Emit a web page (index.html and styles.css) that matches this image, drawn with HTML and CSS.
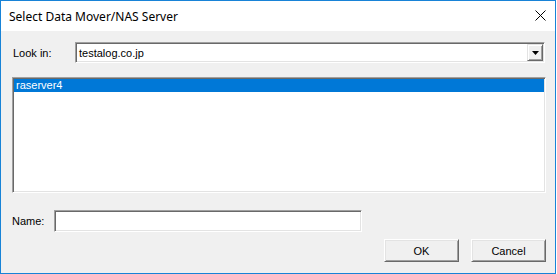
FILE: index.html
```html
<!DOCTYPE html>
<html>
<head>
<meta charset="utf-8">
<link rel="stylesheet" href="styles.css">
</head>
<body>
<div class="window">
  <div class="titlebar">
    <span class="title">Select Data Mover/NAS Server</span>
    <svg class="close" width="11" height="11" viewBox="0 0 11 11"><path d="M0.5 0.5 L10.5 10.5 M10.5 0.5 L0.5 10.5" stroke="#000" stroke-width="1" fill="none"/></svg>
  </div>
  <div class="content">
    <div class="row lookin">
      <span class="lbl lbl-look">Look in:</span>
      <div class="combo">
        <span class="combo-text">testalog.co.jp</span>
        <div class="dd"><svg width="7" height="4" viewBox="0 0 7 4"><path d="M0 0 H7 L3.5 4 Z" fill="#000"/></svg></div>
      </div>
    </div>
    <div class="listbox">
      <div class="item selected">raserver4</div>
    </div>
    <div class="row namerow">
      <span class="lbl lbl-name">Name:</span>
      <div class="edit"></div>
    </div>
    <div class="buttons">
      <div class="btn">OK</div>
      <div class="btn">Cancel</div>
    </div>
  </div>
</div>
</body>
</html>
```
FILE: styles.css
```css
html, body {
  margin: 0;
  padding: 0;
  background: #ffffff;
}
.window {
  width: 556px;
  height: 274px;
  box-sizing: border-box;
  border: 1px solid #1883d7;
  background: #f0f0f0;
  display: flex;
  flex-direction: column;
  font-family: "Liberation Sans", Arial, sans-serif;
  font-size: 11px;
  color: #000;
}
.titlebar {
  height: 30px;
  background: #ffffff;
  display: flex;
  align-items: center;
  justify-content: space-between;
  padding: 0 9px 0 8px;
}
.title {
  font-family: "Noto Sans", "Open Sans", sans-serif;
  font-size: 12px;
  padding-top: 1px;
}
.close {
  display: block;
  margin-bottom: 1px;
}
.content {
  flex: 1;
  display: flex;
  flex-direction: column;
  padding: 11px 9px 0 11px;
}
.row {
  display: flex;
  align-items: center;
}
.lbl-look {
  width: 62px;
  padding-left: 1px;
}
.combo {
  width: 470px;
  height: 21px;
  box-sizing: border-box;
  background: #fff;
  border: 1px solid;
  border-color: #a0a0a0 #ffffff #ffffff #a0a0a0;
  box-shadow: inset 1px 1px #696969, inset -1px -1px #e3e3e3;
  display: flex;
  align-items: center;
  padding: 1px 1px 1px 3px;
}
.combo-text {
  flex: 1;
}
.dd {
  width: 16px;
  height: 17px;
  box-sizing: border-box;
  background: #f0f0f0;
  border: 1px solid;
  border-color: #e3e3e3 #696969 #696969 #e3e3e3;
  box-shadow: inset 1px 1px #fff, inset -1px -1px #a0a0a0;
  display: flex;
  align-items: center;
  justify-content: center;
}
.dd svg {
  display: block;
}
.listbox {
  margin-top: 14px;
  width: 534px;
  height: 116px;
  box-sizing: border-box;
  background: #fff;
  border: 1px solid;
  border-color: #a0a0a0 #ffffff #ffffff #a0a0a0;
  box-shadow: inset 1px 1px #696969, inset -1px -1px #e3e3e3;
  padding: 1px;
}
.item {
  height: 13px;
  line-height: 13px;
  padding-left: 2px;
}
.item.selected {
  background: #0078d7;
  color: #fff;
}
.namerow {
  margin-top: 17px;
}
.lbl-name {
  width: 42px;
}
.edit {
  width: 308px;
  height: 22px;
  box-sizing: border-box;
  background: #fff;
  border: 1px solid;
  border-color: #a0a0a0 #ffffff #ffffff #a0a0a0;
  box-shadow: inset 1px 1px #696969, inset -1px -1px #e3e3e3;
}
.buttons {
  margin-top: 7px;
  display: flex;
  justify-content: flex-end;
  gap: 12px;
  width: 534px;
}
.btn {
  width: 75px;
  height: 23px;
  box-sizing: border-box;
  border: 1px solid;
  border-color: #ffffff #696969 #696969 #ffffff;
  box-shadow: inset 1px 1px #e3e3e3, inset -1px -1px #a0a0a0;
  background: #f0f0f0;
  display: flex;
  align-items: center;
  justify-content: center;
}
```
